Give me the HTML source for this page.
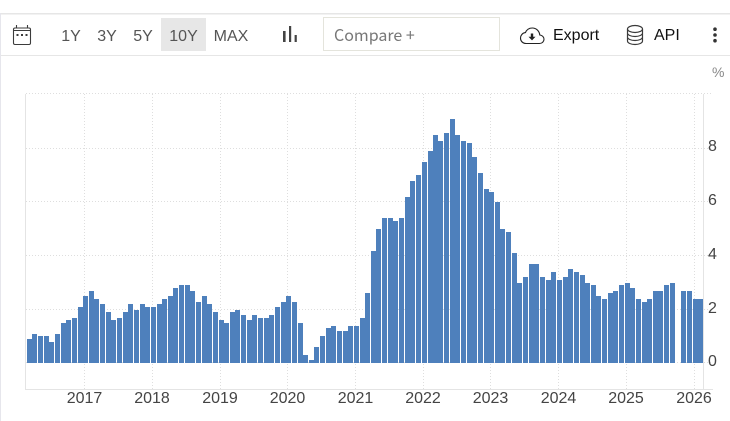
<!DOCTYPE html>
<html><head><meta charset="utf-8"><style>
html,body{margin:0;padding:0;background:#fff}
body{width:730px;height:421px;overflow:hidden;position:relative}
svg{position:absolute;left:0;top:0;display:block}
text{font-family:"Liberation Sans",sans-serif}
</style></head><body>
<svg width="730" height="421" viewBox="0 0 730 421" xmlns="http://www.w3.org/2000/svg">
<!-- frame -->
<rect x="0" y="13" width="730" height="1.5" fill="#e6e6e6"/>
<rect x="0" y="55" width="730" height="1" fill="#e6e6e6"/>
<rect x="0" y="13" width="1" height="408" fill="#e6e6ec"/>
<!-- toolbar -->
<rect x="161" y="18" width="45" height="33" fill="#e7e7e7"/>
<g fill="none" stroke="#3c3c3c" stroke-width="1.1"><rect x="13.5" y="28" width="17" height="16.5" rx="1.5"/><path d="M16.5 25v3M27.5 25v3M13.5 30.5h17"/></g>
<g fill="#3c3c3c"><rect x="16.5" y="34" width="2" height="2"/><rect x="21" y="34" width="2" height="2"/><rect x="25.5" y="34" width="2" height="2"/></g>
<g font-size="16" fill="#555" text-anchor="middle">
<text x="71" y="41">1Y</text><text x="107" y="41">3Y</text><text x="143" y="41">5Y</text><text x="183.500" y="41">10Y</text><text x="231" y="41">MAX</text></g>
<g fill="#444"><rect x="283" y="31" width="2.6" height="11"/><rect x="289" y="26" width="2.2" height="16"/><rect x="294.6" y="35" width="2.2" height="7"/></g>
<rect x="323.5" y="17.5" width="176" height="33" fill="#fff" stroke="#e4e4dc"/>
<text x="334" y="41" font-size="16" fill="#777" style="font-family:'Noto Sans CJK JP',sans-serif">Compare +</text>
<path d="M526 43.5h13.5c2.6 0 4.5-1.9 4.5-4.2s-1.8-4.1-4.2-4.3c-.5-4.200-3.700-7-7.500-7-3.100 0-5.700 1.800-6.900 4.600-3 .4-4.900 2.800-4.900 5.500 0 3 2.300 5.400 5.500 5.400z" fill="none" stroke="#222" stroke-width="1.1"/>
<path d="M530.800 33.500h2.400v3.300h2.300l-3.500 3.600-3.500-3.600h2.300z" fill="#222"/>
<text x="553" y="40" font-size="16" fill="#111">Export</text>
<g fill="none" stroke="#3a3a3a" stroke-width="1.200"><ellipse cx="635" cy="29" rx="7.500" ry="3.500"/><path d="M627.500 29v12c0 2 3.400 3.500 7.500 3.500s7.500-1.500 7.500-3.500V29M627.500 33c0 2 3.400 3.500 7.500 3.500s7.500-1.500 7.500-3.500M627.500 37c0 2 3.400 3.500 7.500 3.500s7.500-1.500 7.500-3.500"/></g>
<text x="654" y="40" font-size="16" fill="#111">API</text>
<g fill="#333"><circle cx="715" cy="29.200" r="1.800"/><circle cx="715" cy="35" r="1.800"/><circle cx="715" cy="40.700" r="1.800"/></g>
<text x="712" y="77" font-size="14" fill="#888">%</text>
<!-- grid -->
<g stroke="#dedede" stroke-width="1" stroke-dasharray="1 2" fill="none">
<path d="M26 93.500H713M26 148.500H713M26 201.500H713M26 255.500H713M26 309.500H713M26 362.500H713"/>
<path d="M84.500 94V389M152.500 94V389M220.500 94V389M287.500 94V389M355.500 94V389M423.500 94V389M490.500 94V389M558.500 94V389M626.500 94V389M694.500 94V389"/>
</g>
<path d="M25.500 94V389.500H713M703.500 94V389" fill="none" stroke="#e4e4e4" stroke-width="1"/>
<!-- bars -->
<path fill="#4e80bc" d="M27 363V339h5V363zM32 363V334h5V363zM38 363V336h5V363zM44 363V336h5V363zM49 363V342h5V363zM55 363V334h5V363zM61 363V323h5V363zM66 363V320h5V363zM72 363V318h5V363zM78 363V307h5V363zM83 363V296h5V363zM89 363V291h5V363zM94 363V299h5V363zM100 363V304h5V363zM106 363V312h5V363zM111 363V320h5V363zM117 363V318h5V363zM123 363V312h5V363zM128 363V304h5V363zM134 363V310h5V363zM140 363V304h5V363zM145 363V307h5V363zM151 363V307h5V363zM157 363V304h5V363zM162 363V299h5V363zM168 363V296h5V363zM173 363V288h5V363zM179 363V285h5V363zM185 363V285h5V363zM190 363V291h5V363zM196 363V302h5V363zM202 363V296h5V363zM207 363V304h5V363zM213 363V312h5V363zM219 363V320h5V363zM224 363V323h5V363zM230 363V312h5V363zM235 363V310h5V363zM241 363V315h5V363zM247 363V320h5V363zM252 363V315h5V363zM258 363V318h5V363zM264 363V318h5V363zM269 363V315h5V363zM275 363V307h5V363zM281 363V302h5V363zM286 363V296h5V363zM292 363V302h5V363zM298 363V323h5V363zM303 363V355h5V363zM309 363V360h5V363zM314 363V347h5V363zM320 363V336h5V363zM326 363V328h5V363zM331 363V326h5V363zM337 363V331h5V363zM343 363V331h5V363zM348 363V326h5V363zM354 363V326h5V363zM360 363V318h5V363zM365 363V293h5V363zM371 363V251h5V363zM376 363V229h5V363zM382 363V218h5V363zM388 363V218h5V363zM393 363V221h5V363zM399 363V218h5V363zM405 363V197h5V363zM410 363V181h5V363zM416 363V175h5V363zM422 363V162h5V363zM428 363V151h5V363zM433 363V135h5V363zM438 363V141h5V363zM444 363V133h5V363zM450 363V119h5V363zM455 363V135h5V363zM461 363V141h5V363zM467 363V143h5V363zM472 363V157h5V363zM478 363V173h5V363zM484 363V189h5V363zM489 363V192h5V363zM495 363V202h5V363zM500 363V229h5V363zM506 363V232h5V363zM512 363V253h5V363zM517 363V283h5V363zM523 363V277h5V363zM529 363V264h5V363zM534 363V264h5V363zM540 363V277h5V363zM546 363V280h5V363zM551 363V272h5V363zM557 363V280h5V363zM563 363V277h5V363zM568 363V269h5V363zM574 363V272h5V363zM580 363V275h5V363zM585 363V283h5V363zM591 363V285h5V363zM596 363V296h5V363zM602 363V299h5V363zM608 363V293h5V363zM613 363V291h5V363zM619 363V285h5V363zM625 363V283h5V363zM630 363V288h5V363zM636 363V299h5V363zM642 363V302h5V363zM647 363V299h5V363zM653 363V291h5V363zM658 363V291h5V363zM664 363V285h5V363zM670 363V283h5V363zM681 363V291h5V363zM687 363V291h5V363zM693 363V299h5V363zM698 363V299h5V363z"/>
<!-- labels -->
<g font-size="16" fill="#444" text-anchor="middle">
<text x="84.500" y="403">2017</text><text x="152" y="403">2018</text><text x="220" y="403">2019</text><text x="287.500" y="403">2020</text><text x="355.500" y="403">2021</text><text x="423" y="403">2022</text><text x="490.500" y="403">2023</text><text x="558.500" y="403">2024</text><text x="626" y="403">2025</text><text x="694" y="403">2026</text>
</g>
<g font-size="16" fill="#444">
<text x="708" y="151">8</text><text x="708" y="205">6</text><text x="708" y="259">4</text><text x="708" y="313">2</text><text x="708" y="366">0</text>
</g>
</svg>
</body></html>
